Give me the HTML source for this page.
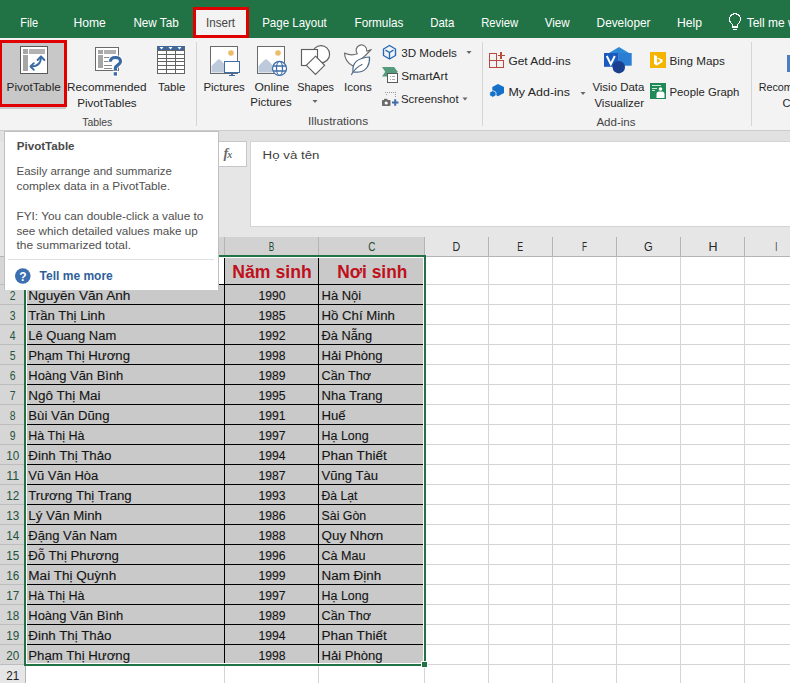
<!DOCTYPE html>
<html><head><meta charset="utf-8"><style>
html,body{margin:0;padding:0;background:#fff;width:790px;height:683px;overflow:hidden}
svg{display:block;font-family:"Liberation Sans", sans-serif}
</style></head><body>
<svg width="790" height="683" viewBox="0 0 790 683" shape-rendering="crispEdges">
<rect x="0" y="0" width="790" height="38" fill="#217346" />
<rect x="193" y="7" width="56" height="31" fill="#f3f3f3" />
<text x="20.3" y="27.3" textLength="17.7" lengthAdjust="spacingAndGlyphs" font-size="13" font-weight="normal" fill="#ffffff" >File</text>
<text x="73.4" y="27.3" textLength="32.4" lengthAdjust="spacingAndGlyphs" font-size="13" font-weight="normal" fill="#ffffff" >Home</text>
<text x="133.4" y="27.3" textLength="45.3" lengthAdjust="spacingAndGlyphs" font-size="13" font-weight="normal" fill="#ffffff" >New Tab</text>
<text x="206" y="27.3" textLength="29" lengthAdjust="spacingAndGlyphs" font-size="13" font-weight="normal" fill="#444444" >Insert</text>
<text x="262.2" y="27.3" textLength="64.6" lengthAdjust="spacingAndGlyphs" font-size="13" font-weight="normal" fill="#ffffff" >Page Layout</text>
<text x="354.5" y="27.3" textLength="48.9" lengthAdjust="spacingAndGlyphs" font-size="13" font-weight="normal" fill="#ffffff" >Formulas</text>
<text x="430.2" y="27.3" textLength="24.1" lengthAdjust="spacingAndGlyphs" font-size="13" font-weight="normal" fill="#ffffff" >Data</text>
<text x="481.2" y="27.3" textLength="37.0" lengthAdjust="spacingAndGlyphs" font-size="13" font-weight="normal" fill="#ffffff" >Review</text>
<text x="544.7" y="27.3" textLength="25.0" lengthAdjust="spacingAndGlyphs" font-size="13" font-weight="normal" fill="#ffffff" >View</text>
<text x="596.6" y="27.3" textLength="53.9" lengthAdjust="spacingAndGlyphs" font-size="13" font-weight="normal" fill="#ffffff" >Developer</text>
<text x="677" y="27.3" textLength="25" lengthAdjust="spacingAndGlyphs" font-size="13" font-weight="normal" fill="#ffffff" >Help</text>
<rect x="194.5" y="8.5" width="53" height="28" fill="none" stroke="#e00000" stroke-width="3"/>
<g fill="none" stroke="#ffffff" stroke-width="1.2"><path d="M732.5 27 v-2.5 c-2-1.5-3-3-3-5.3 a5.5 5.5 0 0 1 11 0 c0 2.3-1 3.8-3 5.3 V27 Z"/><path d="M733 29.5 h4"/></g>
<text x="746.7" y="27.3" textLength="50" lengthAdjust="spacingAndGlyphs" font-size="13" font-weight="normal" fill="#ffffff" >Tell me w</text>
<rect x="0" y="38" width="790" height="92" fill="#f3f3f3" />
<rect x="0" y="130" width="790" height="1" fill="#cccccc" />
<rect x="0" y="40" width="66" height="69" fill="#c8c8c8" />
<rect x="0.5" y="41.5" width="65" height="64" fill="none" stroke="#e00000" stroke-width="3"/>
<rect x="20" y="46" width="28" height="28" fill="#5a5a5a" />
<rect x="21" y="47" width="26" height="26" fill="#ffffff" />
<rect x="23" y="49" width="5" height="5" fill="#a6a6a6" />
<rect x="29" y="49" width="16" height="5" fill="#b3b3b3" />
<rect x="23" y="55" width="5" height="16" fill="#a6a6a6" />
<g fill="none" stroke="#3b6ba3" stroke-width="1.9" shape-rendering="geometricPrecision" stroke-linecap="round" stroke-linejoin="round"><path d="M31.2 66.5 C37.5 66.5 41 63 41 56.8"/><path d="M37.6 60 L41 56.5 L44.4 60"/><path d="M33.8 63.2 L30.5 66.5 L33.8 69.8"/></g>
<text x="6.6" y="90.5" textLength="54.2" lengthAdjust="spacingAndGlyphs" font-size="11.8" font-weight="normal" fill="#262626" >PivotTable</text>
<rect x="95.5" y="47.5" width="23" height="23" fill="#ffffff" stroke="#6a6a6a" stroke-width="1"/>
<rect x="98" y="50" width="4.5" height="4" fill="#a6a6a6" />
<rect x="104" y="50" width="12" height="4" fill="#b0b0b0" />
<rect x="98" y="55" width="4.5" height="13" fill="#a6a6a6" />
<rect x="104" y="56.5" width="8" height="1" fill="#8a8a8a" />
<rect x="104" y="61" width="8" height="1" fill="#8a8a8a" />
<rect x="104" y="64.8" width="8" height="1" fill="#8a8a8a" />
<rect x="104" y="67.5" width="8" height="1" fill="#8a8a8a" />
<g shape-rendering="geometricPrecision" fill="none" stroke-linecap="butt"><path d="M110.5 61.5 C110.5 58.5 112.5 57.5 115.5 57.5 C118.5 57.5 120.5 59 120.5 61.5 C120.5 64.5 116 65 115.4 68 V70.5" stroke="#ffffff" stroke-width="5"/><rect x="112.7" y="71.2" width="5.3" height="5.4" fill="#ffffff"/><path d="M110.5 61.5 C110.5 58.5 112.5 57.5 115.5 57.5 C118.5 57.5 120.5 59 120.5 61.5 C120.5 64.5 116 65 115.4 68 V70.5" stroke="#3a6aa3" stroke-width="3.2"/><rect x="113.7" y="72.2" width="3.3" height="3.4" fill="#3a6aa3"/></g>
<text x="67.1" y="90.6" textLength="79.4" lengthAdjust="spacingAndGlyphs" font-size="11.8" font-weight="normal" fill="#262626" >Recommended</text>
<text x="77.2" y="106.9" textLength="59.5" lengthAdjust="spacingAndGlyphs" font-size="11.8" font-weight="normal" fill="#262626" >PivotTables</text>
<rect x="157" y="46" width="28" height="28" fill="#ffffff" />
<rect x="157" y="46" width="28" height="4" fill="#3a67a3" />
<rect x="157" y="46" width="1" height="28" fill="#646464" />
<rect x="166" y="46" width="1" height="28" fill="#646464" />
<rect x="175" y="46" width="1" height="28" fill="#646464" />
<rect x="184" y="46" width="1" height="28" fill="#646464" />
<rect x="157" y="50" width="28" height="1" fill="#646464" />
<rect x="157" y="54" width="28" height="1" fill="#646464" />
<rect x="157" y="58" width="28" height="1" fill="#646464" />
<rect x="157" y="61" width="28" height="1" fill="#646464" />
<rect x="157" y="65" width="28" height="1" fill="#646464" />
<rect x="157" y="69" width="28" height="1" fill="#646464" />
<rect x="157" y="73" width="28" height="1" fill="#646464" />
<g fill="#ffffff" shape-rendering="geometricPrecision"><path d="M159.5 47 h4 l-2 2.5z"/><path d="M168.5 47 h4 l-2 2.5z"/><path d="M177.5 47 h4 l-2 2.5z"/></g>
<text x="158" y="90.6" textLength="27.3" lengthAdjust="spacingAndGlyphs" font-size="11.8" font-weight="normal" fill="#262626" >Table</text>
<text x="82.2" y="125.5" textLength="30.1" lengthAdjust="spacingAndGlyphs" font-size="11.8" font-weight="normal" fill="#444444" >Tables</text>
<rect x="196" y="42" width="1" height="84" fill="#d5d5d5" />
<rect x="210.5" y="46.5" width="27" height="27" fill="#ffffff" stroke="#6a6a6a" stroke-width="1"/>
<circle cx="231" cy="53" r="2.8" fill="#ebbd66" shape-rendering="geometricPrecision"/>
<path d="M211.5 72.5 L211.5 66 L217.5 60 C218.5 59 219.5 59 220.5 60 L224 63.5 L224 72.5Z" fill="#bccadb" shape-rendering="geometricPrecision"/>
<rect x="224.5" y="61.5" width="15" height="11" fill="#ffffff" stroke="#3f6ea8" stroke-width="1.6"/>
<rect x="229" y="75" width="6" height="1.2" fill="#3f6ea8" />
<rect x="231.3" y="73" width="1.4" height="2" fill="#3f6ea8" />
<text x="203.4" y="90.8" textLength="41.4" lengthAdjust="spacingAndGlyphs" font-size="11.8" font-weight="normal" fill="#262626" >Pictures</text>
<rect x="257.5" y="46.5" width="27" height="27" fill="#ffffff" stroke="#6a6a6a" stroke-width="1"/>
<circle cx="278" cy="53" r="2.8" fill="#ebbd66" shape-rendering="geometricPrecision"/>
<path d="M258.5 72.5 L258.5 66 L264.5 60 C265.5 59 266.5 59 267.5 60 L272 64.5 L272 72.5Z" fill="#bccadb" shape-rendering="geometricPrecision"/>
<g shape-rendering="geometricPrecision" fill="none" stroke="#3f6ea8" stroke-width="1.3"><circle cx="279.5" cy="68.4" r="7" fill="#ffffff"/><ellipse cx="279.5" cy="68.4" rx="3" ry="7"/><path d="M272.8 66 h13.4 M272.8 71 h13.4"/></g>
<text x="254.4" y="90.8" textLength="34.9" lengthAdjust="spacingAndGlyphs" font-size="11.8" font-weight="normal" fill="#262626" >Online</text>
<text x="250.3" y="106.2" textLength="41.4" lengthAdjust="spacingAndGlyphs" font-size="11.8" font-weight="normal" fill="#262626" >Pictures</text>
<g shape-rendering="geometricPrecision" fill="#ffffff" stroke="#5e5e5e" stroke-width="1.15"><circle cx="321" cy="54.2" r="8.6"/><rect x="301.5" y="49.5" width="16" height="16"/><path d="M315.5 56.2 L324.6 65.3 L315.5 74.4 L306.4 65.3 Z"/></g>
<text x="297.2" y="90.8" textLength="36.8" lengthAdjust="spacingAndGlyphs" font-size="11.8" font-weight="normal" fill="#262626" >Shapes</text>
<path d="M312.5 100 h5 l-2.5 3z" fill="#666" shape-rendering="geometricPrecision"/>
<g shape-rendering="geometricPrecision" fill="#ffffff" stroke-width="1.2" stroke-linecap="round" stroke-linejoin="round"><path stroke="#6e6e6e" d="M357.3 53.8 A5.4 5.4 0 1 1 366.8 51.2 L371.3 49.6 L367 53.8 C366 55 365 55.5 364 56.8 L353 66 C349 64 344.8 60 344.5 53 C348.5 55 353.5 55.2 357.3 53.8 Z"/><path stroke="#4f6b8c" d="M353 72 C352 62 358 58 369.5 57 C370 64 367 71 359 72 C357 72.3 355 72.3 353 72 Z"/><path stroke="#4f6b8c" fill="none" d="M351.5 74.5 C354 70 357 67 362 64.5"/></g>
<text x="344" y="90.8" textLength="27.8" lengthAdjust="spacingAndGlyphs" font-size="11.8" font-weight="normal" fill="#262626" >Icons</text>
<text x="308" y="125" textLength="60.2" lengthAdjust="spacingAndGlyphs" font-size="11.8" font-weight="normal" fill="#444444" >Illustrations</text>
<g shape-rendering="geometricPrecision" fill="none" stroke="#2468b8" stroke-width="1.35" stroke-linejoin="round"><path d="M389.5 45.5 L395.5 49 V55.5 L389.5 59 L383.5 55.5 V49 Z"/><path d="M385.5 50.2 L389.5 52.5 L393.5 50.2 M389.5 52.5 V58.5"/></g>
<text x="401.2" y="56.8" textLength="55.7" lengthAdjust="spacingAndGlyphs" font-size="11.8" font-weight="normal" fill="#262626" >3D Models</text>
<path d="M466.5 51 h5 l-2.5 3z" fill="#666" shape-rendering="geometricPrecision"/>
<g shape-rendering="geometricPrecision"><path d="M382 67 H394 L397.8 71.8 L394 76.5 H382 L385.2 71.8 Z" fill="#559c7d"/></g>
<rect x="387" y="73" width="11" height="10" fill="#5a5a5a" />
<rect x="388" y="74" width="9" height="8" fill="#ffffff" />
<rect x="390" y="76" width="1" height="1" fill="#aaa" />
<rect x="392" y="76" width="3" height="1" fill="#aaa" />
<rect x="390" y="79" width="1" height="1" fill="#aaa" />
<rect x="392" y="79" width="3" height="1" fill="#aaa" />
<text x="401.2" y="79.8" textLength="46.5" lengthAdjust="spacingAndGlyphs" font-size="11.8" font-weight="normal" fill="#262626" >SmartArt</text>
<rect x="385" y="92" width="1" height="1" fill="#9a9a9a" />
<rect x="387" y="92" width="1" height="1" fill="#9a9a9a" />
<rect x="389" y="92" width="1" height="1" fill="#9a9a9a" />
<rect x="391" y="92" width="1" height="1" fill="#9a9a9a" />
<rect x="393" y="92" width="1" height="1" fill="#9a9a9a" />
<rect x="395" y="92" width="1" height="1" fill="#9a9a9a" />
<rect x="386" y="94" width="1" height="1" fill="#9a9a9a" />
<rect x="395" y="94" width="1" height="1" fill="#9a9a9a" />
<rect x="395" y="96" width="1" height="1" fill="#9a9a9a" />
<g shape-rendering="geometricPrecision"><rect x="382" y="100" width="8.5" height="6" rx="0.8" fill="#6b6b6b"/><rect x="384" y="98.8" width="3.5" height="2" fill="#6b6b6b"/><circle cx="386.2" cy="103" r="1.6" fill="#ffffff"/><path d="M392 102.5 h6.5 M395.2 99.3 v6.5" stroke="#3f6ea8" stroke-width="2"/></g>
<text x="401" y="102.8" textLength="57.6" lengthAdjust="spacingAndGlyphs" font-size="11.8" font-weight="normal" fill="#262626" >Screenshot</text>
<path d="M462.5 97.5 h5 l-2.5 3z" fill="#666" shape-rendering="geometricPrecision"/>
<rect x="482" y="42" width="1" height="84" fill="#d5d5d5" />
<g fill="none" stroke="#b94a3c" stroke-width="1.1"><path d="M489.5 53.5 H496.5 V67.5 H489.5 Z M489.5 60.5 H503.5 V67.5 H496.5"/><path d="M501 52 V59 M497.5 55.5 H504.5"/></g>
<text x="508.4" y="64.7" textLength="62.3" lengthAdjust="spacingAndGlyphs" font-size="11.8" font-weight="normal" fill="#262626" >Get Add-ins</text>
<g shape-rendering="geometricPrecision" fill="#1470c8"><path d="M498 84 L504 87 V93 L498 96.2 L492.3 93 V87 Z"/><path d="M492.8 90.5 L496 92.3 V95.5 L492.8 97.3 L489.7 95.5 V92.3 Z" stroke="#f3f3f3" stroke-width="0.8"/></g>
<text x="508.4" y="95.7" textLength="61.6" lengthAdjust="spacingAndGlyphs" font-size="11.8" font-weight="normal" fill="#262626" >My Add-ins</text>
<path d="M580.5 92 h5 l-2.5 3z" fill="#666" shape-rendering="geometricPrecision"/>
<g shape-rendering="geometricPrecision"><path d="M609 53 L619 47 L629 53 Z" fill="#2d8ad8"/><rect x="618.5" y="53" width="13.2" height="12.7" fill="#2b7cd3"/><rect x="604" y="53" width="14.6" height="13.8" fill="#185abd"/><circle cx="618.8" cy="67.2" r="6.2" fill="#1b3f8f"/><path d="M606.8 56 L610.8 64.3 L614.8 56" fill="none" stroke="#ffffff" stroke-width="2"/></g>
<text x="592.4" y="91" textLength="52" lengthAdjust="spacingAndGlyphs" font-size="11.8" font-weight="normal" fill="#262626" >Visio Data</text>
<text x="594.4" y="106.5" textLength="49.6" lengthAdjust="spacingAndGlyphs" font-size="11.8" font-weight="normal" fill="#262626" >Visualizer</text>
<text x="596.4" y="125.5" textLength="39.1" lengthAdjust="spacingAndGlyphs" font-size="11.8" font-weight="normal" fill="#444444" >Add-ins</text>
<rect x="650" y="52" width="16" height="16" fill="#f5b400" />
<path d="M654 55 L657 56 V63 L660.5 61 L659 59.5 L657.5 58.8 V57.8 L662.5 59.5 V62 L657 65.5 L654 64 Z" fill="#ffffff" shape-rendering="geometricPrecision"/>
<text x="669.5" y="64.7" textLength="55.3" lengthAdjust="spacingAndGlyphs" font-size="11.8" font-weight="normal" fill="#262626" >Bing Maps</text>
<rect x="650" y="83" width="16" height="16" fill="#1f8a57" />
<rect x="652" y="85" width="9" height="1" fill="#cfe8da" />
<rect x="652" y="87.5" width="5" height="1" fill="#cfe8da" />
<rect x="652" y="90" width="3" height="1" fill="#cfe8da" />
<g shape-rendering="geometricPrecision" fill="#ffffff"><circle cx="660.5" cy="89" r="1.8"/><path d="M656.5 98 V94 C656.5 92 658 91.5 660.5 91.5 C663 91.5 664.5 92 664.5 94 V98Z"/></g>
<text x="669.5" y="95.7" textLength="69.9" lengthAdjust="spacingAndGlyphs" font-size="11.8" font-weight="normal" fill="#262626" >People Graph</text>
<rect x="751" y="42" width="1" height="84" fill="#d5d5d5" />
<rect x="787" y="55" width="3" height="17" fill="#4a7fbf" />
<text x="758.7" y="90.6" textLength="34" lengthAdjust="spacingAndGlyphs" font-size="11.8" font-weight="normal" fill="#262626" >Recom</text>
<text x="782.5" y="106.5" textLength="8" lengthAdjust="spacingAndGlyphs" font-size="11.8" font-weight="normal" fill="#262626" >C</text>
<rect x="0" y="131" width="790" height="106" fill="#e6e6e6" />
<rect x="0" y="131" width="790" height="10" fill="#e1e1e1" />
<rect x="218" y="141" width="29" height="26" fill="#c6c6c6" />
<rect x="219" y="142" width="27" height="24" fill="#ffffff" />
<text x="223.5" y="157.5" font-family="Liberation Serif, serif" font-style="italic" font-weight="bold" font-size="14" fill="#6a6a6a">f</text>
<text x="227.3" y="157.7" font-family="Liberation Serif, serif" font-style="italic" font-weight="bold" font-size="10" fill="#6a6a6a">x</text>
<rect x="250.5" y="141.5" width="560" height="85" fill="#ffffff" stroke="#d4d4d4" stroke-width="1"/>
<text x="262.6" y="158.8" textLength="56.8" lengthAdjust="spacingAndGlyphs" font-size="11.7" font-weight="normal" fill="#404040" >Họ và tên</text>
<rect x="0" y="237" width="790" height="19" fill="#e6e6e6" />
<rect x="25" y="237" width="399" height="19" fill="#d2d2d2" />
<rect x="0" y="256" width="790" height="427" fill="#ffffff" />
<rect x="0" y="256" width="25" height="427" fill="#e6e6e6" />
<rect x="0" y="257" width="24" height="407" fill="#d6d6d6" />
<rect x="224" y="256" width="1" height="427" fill="#d4d4d4" />
<rect x="318" y="256" width="1" height="427" fill="#d4d4d4" />
<rect x="424" y="256" width="1" height="427" fill="#d4d4d4" />
<rect x="488" y="256" width="1" height="427" fill="#d4d4d4" />
<rect x="552" y="256" width="1" height="427" fill="#d4d4d4" />
<rect x="616" y="256" width="1" height="427" fill="#d4d4d4" />
<rect x="680" y="256" width="1" height="427" fill="#d4d4d4" />
<rect x="744" y="256" width="1" height="427" fill="#d4d4d4" />
<rect x="808" y="256" width="1" height="427" fill="#d4d4d4" />
<rect x="25" y="284" width="765" height="1" fill="#d4d4d4" />
<rect x="25" y="304" width="765" height="1" fill="#d4d4d4" />
<rect x="25" y="324" width="765" height="1" fill="#d4d4d4" />
<rect x="25" y="344" width="765" height="1" fill="#d4d4d4" />
<rect x="25" y="364" width="765" height="1" fill="#d4d4d4" />
<rect x="25" y="384" width="765" height="1" fill="#d4d4d4" />
<rect x="25" y="404" width="765" height="1" fill="#d4d4d4" />
<rect x="25" y="424" width="765" height="1" fill="#d4d4d4" />
<rect x="25" y="444" width="765" height="1" fill="#d4d4d4" />
<rect x="25" y="464" width="765" height="1" fill="#d4d4d4" />
<rect x="25" y="484" width="765" height="1" fill="#d4d4d4" />
<rect x="25" y="504" width="765" height="1" fill="#d4d4d4" />
<rect x="25" y="524" width="765" height="1" fill="#d4d4d4" />
<rect x="25" y="544" width="765" height="1" fill="#d4d4d4" />
<rect x="25" y="564" width="765" height="1" fill="#d4d4d4" />
<rect x="25" y="584" width="765" height="1" fill="#d4d4d4" />
<rect x="25" y="604" width="765" height="1" fill="#d4d4d4" />
<rect x="25" y="624" width="765" height="1" fill="#d4d4d4" />
<rect x="25" y="644" width="765" height="1" fill="#d4d4d4" />
<rect x="25" y="664" width="765" height="1" fill="#d4d4d4" />
<rect x="25" y="684" width="765" height="1" fill="#d4d4d4" />
<rect x="224" y="237" width="1" height="19" fill="#b4b4b4" />
<rect x="318" y="237" width="1" height="19" fill="#b4b4b4" />
<rect x="424" y="237" width="1" height="19" fill="#b4b4b4" />
<rect x="488" y="237" width="1" height="19" fill="#b4b4b4" />
<rect x="552" y="237" width="1" height="19" fill="#b4b4b4" />
<rect x="616" y="237" width="1" height="19" fill="#b4b4b4" />
<rect x="680" y="237" width="1" height="19" fill="#b4b4b4" />
<rect x="744" y="237" width="1" height="19" fill="#b4b4b4" />
<rect x="808" y="237" width="1" height="19" fill="#b4b4b4" />
<rect x="0" y="284" width="24" height="1" fill="#bdbdbd" />
<rect x="0" y="304" width="24" height="1" fill="#bdbdbd" />
<rect x="0" y="324" width="24" height="1" fill="#bdbdbd" />
<rect x="0" y="344" width="24" height="1" fill="#bdbdbd" />
<rect x="0" y="364" width="24" height="1" fill="#bdbdbd" />
<rect x="0" y="384" width="24" height="1" fill="#bdbdbd" />
<rect x="0" y="404" width="24" height="1" fill="#bdbdbd" />
<rect x="0" y="424" width="24" height="1" fill="#bdbdbd" />
<rect x="0" y="444" width="24" height="1" fill="#bdbdbd" />
<rect x="0" y="464" width="24" height="1" fill="#bdbdbd" />
<rect x="0" y="484" width="24" height="1" fill="#bdbdbd" />
<rect x="0" y="504" width="24" height="1" fill="#bdbdbd" />
<rect x="0" y="524" width="24" height="1" fill="#bdbdbd" />
<rect x="0" y="544" width="24" height="1" fill="#bdbdbd" />
<rect x="0" y="564" width="24" height="1" fill="#bdbdbd" />
<rect x="0" y="584" width="24" height="1" fill="#bdbdbd" />
<rect x="0" y="604" width="24" height="1" fill="#bdbdbd" />
<rect x="0" y="624" width="24" height="1" fill="#bdbdbd" />
<rect x="0" y="644" width="24" height="1" fill="#bdbdbd" />
<rect x="0" y="664" width="24" height="1" fill="#bdbdbd" />
<rect x="0" y="684" width="24" height="1" fill="#bdbdbd" />
<rect x="25" y="256" width="1" height="427" fill="#b4b4b4" />
<rect x="0" y="256" width="790" height="1" fill="#b4b4b4" />
<text x="268.8" y="251" textLength="5.5" lengthAdjust="spacingAndGlyphs" font-size="12.3" font-weight="normal" fill="#1f4a32" >B</text>
<text x="368.3" y="251" textLength="7.2" lengthAdjust="spacingAndGlyphs" font-size="12.3" font-weight="normal" fill="#1f4a32" >C</text>
<text x="452.6" y="251" textLength="7.7" lengthAdjust="spacingAndGlyphs" font-size="12.3" font-weight="normal" fill="#262626" >D</text>
<text x="517.3" y="251" textLength="5.9" lengthAdjust="spacingAndGlyphs" font-size="12.3" font-weight="normal" fill="#262626" >E</text>
<text x="582" y="251" textLength="5" lengthAdjust="spacingAndGlyphs" font-size="12.3" font-weight="normal" fill="#262626" >F</text>
<text x="644" y="251" textLength="8.7" lengthAdjust="spacingAndGlyphs" font-size="12.3" font-weight="normal" fill="#262626" >G</text>
<text x="708.4" y="251" textLength="9.0" lengthAdjust="spacingAndGlyphs" font-size="12.3" font-weight="normal" fill="#262626" >H</text>
<text x="775.3" y="251" textLength="2.0" lengthAdjust="spacingAndGlyphs" font-size="12.3" font-weight="normal" fill="#262626" >I</text>
<rect x="26" y="257" width="398" height="407" fill="#ffffff" />
<rect x="27" y="258" width="396" height="405" fill="#c9c9c9" />
<rect x="27" y="258" width="197" height="26" fill="#ffffff" />
<rect x="27" y="284" width="396" height="1" fill="#000000" />
<rect x="27" y="304" width="396" height="1" fill="#000000" />
<rect x="27" y="324" width="396" height="1" fill="#000000" />
<rect x="27" y="344" width="396" height="1" fill="#000000" />
<rect x="27" y="364" width="396" height="1" fill="#000000" />
<rect x="27" y="384" width="396" height="1" fill="#000000" />
<rect x="27" y="404" width="396" height="1" fill="#000000" />
<rect x="27" y="424" width="396" height="1" fill="#000000" />
<rect x="27" y="444" width="396" height="1" fill="#000000" />
<rect x="27" y="464" width="396" height="1" fill="#000000" />
<rect x="27" y="484" width="396" height="1" fill="#000000" />
<rect x="27" y="504" width="396" height="1" fill="#000000" />
<rect x="27" y="524" width="396" height="1" fill="#000000" />
<rect x="27" y="544" width="396" height="1" fill="#000000" />
<rect x="27" y="564" width="396" height="1" fill="#000000" />
<rect x="27" y="584" width="396" height="1" fill="#000000" />
<rect x="27" y="604" width="396" height="1" fill="#000000" />
<rect x="27" y="624" width="396" height="1" fill="#000000" />
<rect x="27" y="644" width="396" height="1" fill="#000000" />
<rect x="27" y="664" width="396" height="1" fill="#000000" />
<rect x="224" y="258" width="1" height="405" fill="#000000" />
<rect x="318" y="258" width="1" height="405" fill="#000000" />
<text x="28.3" y="300" textLength="102.1" lengthAdjust="spacingAndGlyphs" font-size="12.5" font-weight="normal" fill="#141414" stroke="#141414" stroke-width="0.12">Nguyễn Văn Anh</text>
<text x="258.5" y="300" textLength="27.1" lengthAdjust="spacingAndGlyphs" font-size="13" font-weight="normal" fill="#141414" stroke="#141414" stroke-width="0.12">1990</text>
<text x="321.5" y="300" textLength="39.7" lengthAdjust="spacingAndGlyphs" font-size="12.5" font-weight="normal" fill="#141414" stroke="#141414" stroke-width="0.12">Hà Nội</text>
<text x="28.3" y="320" textLength="76.7" lengthAdjust="spacingAndGlyphs" font-size="12.5" font-weight="normal" fill="#141414" stroke="#141414" stroke-width="0.12">Trần Thị Linh</text>
<text x="258.5" y="320" textLength="27.1" lengthAdjust="spacingAndGlyphs" font-size="13" font-weight="normal" fill="#141414" stroke="#141414" stroke-width="0.12">1985</text>
<text x="321.5" y="320" textLength="73.4" lengthAdjust="spacingAndGlyphs" font-size="12.5" font-weight="normal" fill="#141414" stroke="#141414" stroke-width="0.12">Hồ Chí Minh</text>
<text x="28.3" y="340" textLength="87.9" lengthAdjust="spacingAndGlyphs" font-size="12.5" font-weight="normal" fill="#141414" stroke="#141414" stroke-width="0.12">Lê Quang Nam</text>
<text x="258.5" y="340" textLength="27.1" lengthAdjust="spacingAndGlyphs" font-size="13" font-weight="normal" fill="#141414" stroke="#141414" stroke-width="0.12">1992</text>
<text x="321.5" y="340" textLength="50.5" lengthAdjust="spacingAndGlyphs" font-size="12.5" font-weight="normal" fill="#141414" stroke="#141414" stroke-width="0.12">Đà Nẵng</text>
<text x="28.3" y="360" textLength="101.7" lengthAdjust="spacingAndGlyphs" font-size="12.5" font-weight="normal" fill="#141414" stroke="#141414" stroke-width="0.12">Phạm Thị Hương</text>
<text x="258.5" y="360" textLength="27.1" lengthAdjust="spacingAndGlyphs" font-size="13" font-weight="normal" fill="#141414" stroke="#141414" stroke-width="0.12">1998</text>
<text x="321.5" y="360" textLength="61.1" lengthAdjust="spacingAndGlyphs" font-size="12.5" font-weight="normal" fill="#141414" stroke="#141414" stroke-width="0.12">Hải Phòng</text>
<text x="28.3" y="380" textLength="95.0" lengthAdjust="spacingAndGlyphs" font-size="12.5" font-weight="normal" fill="#141414" stroke="#141414" stroke-width="0.12">Hoàng Văn Bình</text>
<text x="258.5" y="380" textLength="27.1" lengthAdjust="spacingAndGlyphs" font-size="13" font-weight="normal" fill="#141414" stroke="#141414" stroke-width="0.12">1989</text>
<text x="321.5" y="380" textLength="49.5" lengthAdjust="spacingAndGlyphs" font-size="12.5" font-weight="normal" fill="#141414" stroke="#141414" stroke-width="0.12">Cần Thơ</text>
<text x="28.3" y="400" textLength="72.3" lengthAdjust="spacingAndGlyphs" font-size="12.5" font-weight="normal" fill="#141414" stroke="#141414" stroke-width="0.12">Ngô Thị Mai</text>
<text x="258.5" y="400" textLength="27.1" lengthAdjust="spacingAndGlyphs" font-size="13" font-weight="normal" fill="#141414" stroke="#141414" stroke-width="0.12">1995</text>
<text x="321.5" y="400" textLength="61.1" lengthAdjust="spacingAndGlyphs" font-size="12.5" font-weight="normal" fill="#141414" stroke="#141414" stroke-width="0.12">Nha Trang</text>
<text x="28.3" y="420" textLength="81.2" lengthAdjust="spacingAndGlyphs" font-size="12.5" font-weight="normal" fill="#141414" stroke="#141414" stroke-width="0.12">Bùi Văn Dũng</text>
<text x="258.5" y="420" textLength="27.1" lengthAdjust="spacingAndGlyphs" font-size="13" font-weight="normal" fill="#141414" stroke="#141414" stroke-width="0.12">1991</text>
<text x="321.5" y="420" textLength="24.2" lengthAdjust="spacingAndGlyphs" font-size="12.5" font-weight="normal" fill="#141414" stroke="#141414" stroke-width="0.12">Huế</text>
<text x="28.3" y="440" textLength="56.1" lengthAdjust="spacingAndGlyphs" font-size="12.5" font-weight="normal" fill="#141414" stroke="#141414" stroke-width="0.12">Hà Thị Hà</text>
<text x="258.5" y="440" textLength="27.1" lengthAdjust="spacingAndGlyphs" font-size="13" font-weight="normal" fill="#141414" stroke="#141414" stroke-width="0.12">1997</text>
<text x="321.5" y="440" textLength="47.1" lengthAdjust="spacingAndGlyphs" font-size="12.5" font-weight="normal" fill="#141414" stroke="#141414" stroke-width="0.12">Hạ Long</text>
<text x="28.3" y="460" textLength="83.2" lengthAdjust="spacingAndGlyphs" font-size="12.5" font-weight="normal" fill="#141414" stroke="#141414" stroke-width="0.12">Đinh Thị Thảo</text>
<text x="258.5" y="460" textLength="27.1" lengthAdjust="spacingAndGlyphs" font-size="13" font-weight="normal" fill="#141414" stroke="#141414" stroke-width="0.12">1994</text>
<text x="321.5" y="460" textLength="65.2" lengthAdjust="spacingAndGlyphs" font-size="12.5" font-weight="normal" fill="#141414" stroke="#141414" stroke-width="0.12">Phan Thiết</text>
<text x="28.3" y="480" textLength="70.0" lengthAdjust="spacingAndGlyphs" font-size="12.5" font-weight="normal" fill="#141414" stroke="#141414" stroke-width="0.12">Vũ Văn Hòa</text>
<text x="258.5" y="480" textLength="27.1" lengthAdjust="spacingAndGlyphs" font-size="13" font-weight="normal" fill="#141414" stroke="#141414" stroke-width="0.12">1987</text>
<text x="321.5" y="480" textLength="56.5" lengthAdjust="spacingAndGlyphs" font-size="12.5" font-weight="normal" fill="#141414" stroke="#141414" stroke-width="0.12">Vũng Tàu</text>
<text x="28.3" y="500" textLength="103.4" lengthAdjust="spacingAndGlyphs" font-size="12.5" font-weight="normal" fill="#141414" stroke="#141414" stroke-width="0.12">Trương Thị Trang</text>
<text x="258.5" y="500" textLength="27.1" lengthAdjust="spacingAndGlyphs" font-size="13" font-weight="normal" fill="#141414" stroke="#141414" stroke-width="0.12">1993</text>
<text x="321.5" y="500" textLength="35.9" lengthAdjust="spacingAndGlyphs" font-size="12.5" font-weight="normal" fill="#141414" stroke="#141414" stroke-width="0.12">Đà Lạt</text>
<text x="28.3" y="520" textLength="73.7" lengthAdjust="spacingAndGlyphs" font-size="12.5" font-weight="normal" fill="#141414" stroke="#141414" stroke-width="0.12">Lý Văn Minh</text>
<text x="258.5" y="520" textLength="27.1" lengthAdjust="spacingAndGlyphs" font-size="13" font-weight="normal" fill="#141414" stroke="#141414" stroke-width="0.12">1986</text>
<text x="321.5" y="520" textLength="44.7" lengthAdjust="spacingAndGlyphs" font-size="12.5" font-weight="normal" fill="#141414" stroke="#141414" stroke-width="0.12">Sài Gòn</text>
<text x="28.3" y="540" textLength="88.9" lengthAdjust="spacingAndGlyphs" font-size="12.5" font-weight="normal" fill="#141414" stroke="#141414" stroke-width="0.12">Đặng Văn Nam</text>
<text x="258.5" y="540" textLength="27.1" lengthAdjust="spacingAndGlyphs" font-size="13" font-weight="normal" fill="#141414" stroke="#141414" stroke-width="0.12">1988</text>
<text x="321.5" y="540" textLength="61.7" lengthAdjust="spacingAndGlyphs" font-size="12.5" font-weight="normal" fill="#141414" stroke="#141414" stroke-width="0.12">Quy Nhơn</text>
<text x="28.3" y="560" textLength="90.5" lengthAdjust="spacingAndGlyphs" font-size="12.5" font-weight="normal" fill="#141414" stroke="#141414" stroke-width="0.12">Đỗ Thị Phương</text>
<text x="258.5" y="560" textLength="27.1" lengthAdjust="spacingAndGlyphs" font-size="13" font-weight="normal" fill="#141414" stroke="#141414" stroke-width="0.12">1996</text>
<text x="321.5" y="560" textLength="44.1" lengthAdjust="spacingAndGlyphs" font-size="12.5" font-weight="normal" fill="#141414" stroke="#141414" stroke-width="0.12">Cà Mau</text>
<text x="28.3" y="580" textLength="87.9" lengthAdjust="spacingAndGlyphs" font-size="12.5" font-weight="normal" fill="#141414" stroke="#141414" stroke-width="0.12">Mai Thị Quỳnh</text>
<text x="258.5" y="580" textLength="27.1" lengthAdjust="spacingAndGlyphs" font-size="13" font-weight="normal" fill="#141414" stroke="#141414" stroke-width="0.12">1999</text>
<text x="321.5" y="580" textLength="59.7" lengthAdjust="spacingAndGlyphs" font-size="12.5" font-weight="normal" fill="#141414" stroke="#141414" stroke-width="0.12">Nam Định</text>
<text x="28.3" y="600" textLength="56.1" lengthAdjust="spacingAndGlyphs" font-size="12.5" font-weight="normal" fill="#141414" stroke="#141414" stroke-width="0.12">Hà Thị Hà</text>
<text x="258.5" y="600" textLength="27.1" lengthAdjust="spacingAndGlyphs" font-size="13" font-weight="normal" fill="#141414" stroke="#141414" stroke-width="0.12">1997</text>
<text x="321.5" y="600" textLength="47.1" lengthAdjust="spacingAndGlyphs" font-size="12.5" font-weight="normal" fill="#141414" stroke="#141414" stroke-width="0.12">Hạ Long</text>
<text x="28.3" y="620" textLength="95.0" lengthAdjust="spacingAndGlyphs" font-size="12.5" font-weight="normal" fill="#141414" stroke="#141414" stroke-width="0.12">Hoàng Văn Bình</text>
<text x="258.5" y="620" textLength="27.1" lengthAdjust="spacingAndGlyphs" font-size="13" font-weight="normal" fill="#141414" stroke="#141414" stroke-width="0.12">1989</text>
<text x="321.5" y="620" textLength="49.5" lengthAdjust="spacingAndGlyphs" font-size="12.5" font-weight="normal" fill="#141414" stroke="#141414" stroke-width="0.12">Cần Thơ</text>
<text x="28.3" y="640" textLength="83.2" lengthAdjust="spacingAndGlyphs" font-size="12.5" font-weight="normal" fill="#141414" stroke="#141414" stroke-width="0.12">Đinh Thị Thảo</text>
<text x="258.5" y="640" textLength="27.1" lengthAdjust="spacingAndGlyphs" font-size="13" font-weight="normal" fill="#141414" stroke="#141414" stroke-width="0.12">1994</text>
<text x="321.5" y="640" textLength="65.2" lengthAdjust="spacingAndGlyphs" font-size="12.5" font-weight="normal" fill="#141414" stroke="#141414" stroke-width="0.12">Phan Thiết</text>
<text x="28.3" y="660" textLength="101.7" lengthAdjust="spacingAndGlyphs" font-size="12.5" font-weight="normal" fill="#141414" stroke="#141414" stroke-width="0.12">Phạm Thị Hương</text>
<text x="258.5" y="660" textLength="27.1" lengthAdjust="spacingAndGlyphs" font-size="13" font-weight="normal" fill="#141414" stroke="#141414" stroke-width="0.12">1998</text>
<text x="321.5" y="660" textLength="61.1" lengthAdjust="spacingAndGlyphs" font-size="12.5" font-weight="normal" fill="#141414" stroke="#141414" stroke-width="0.12">Hải Phòng</text>
<text x="232.3" y="278" textLength="79.4" lengthAdjust="spacingAndGlyphs" font-size="18" font-weight="bold" fill="#c0101c" >Năm sinh</text>
<text x="337.2" y="278" textLength="70.2" lengthAdjust="spacingAndGlyphs" font-size="18" font-weight="bold" fill="#c0101c" >Nơi sinh</text>
<text x="9.799999999999999" y="300" textLength="5.8" lengthAdjust="spacingAndGlyphs" font-size="12.5" font-weight="normal" fill="#26533b" >2</text>
<text x="9.799999999999999" y="320" textLength="5.8" lengthAdjust="spacingAndGlyphs" font-size="12.5" font-weight="normal" fill="#26533b" >3</text>
<text x="9.799999999999999" y="340" textLength="5.8" lengthAdjust="spacingAndGlyphs" font-size="12.5" font-weight="normal" fill="#26533b" >4</text>
<text x="9.799999999999999" y="360" textLength="5.8" lengthAdjust="spacingAndGlyphs" font-size="12.5" font-weight="normal" fill="#26533b" >5</text>
<text x="9.799999999999999" y="380" textLength="5.8" lengthAdjust="spacingAndGlyphs" font-size="12.5" font-weight="normal" fill="#26533b" >6</text>
<text x="9.799999999999999" y="400" textLength="5.8" lengthAdjust="spacingAndGlyphs" font-size="12.5" font-weight="normal" fill="#26533b" >7</text>
<text x="9.799999999999999" y="420" textLength="5.8" lengthAdjust="spacingAndGlyphs" font-size="12.5" font-weight="normal" fill="#26533b" >8</text>
<text x="9.799999999999999" y="440" textLength="5.8" lengthAdjust="spacingAndGlyphs" font-size="12.5" font-weight="normal" fill="#26533b" >9</text>
<text x="6.199999999999999" y="460" textLength="13" lengthAdjust="spacingAndGlyphs" font-size="12.5" font-weight="normal" fill="#26533b" >10</text>
<text x="6.199999999999999" y="480" textLength="13" lengthAdjust="spacingAndGlyphs" font-size="12.5" font-weight="normal" fill="#26533b" >11</text>
<text x="6.199999999999999" y="500" textLength="13" lengthAdjust="spacingAndGlyphs" font-size="12.5" font-weight="normal" fill="#26533b" >12</text>
<text x="6.199999999999999" y="520" textLength="13" lengthAdjust="spacingAndGlyphs" font-size="12.5" font-weight="normal" fill="#26533b" >13</text>
<text x="6.199999999999999" y="540" textLength="13" lengthAdjust="spacingAndGlyphs" font-size="12.5" font-weight="normal" fill="#26533b" >14</text>
<text x="6.199999999999999" y="560" textLength="13" lengthAdjust="spacingAndGlyphs" font-size="12.5" font-weight="normal" fill="#26533b" >15</text>
<text x="6.199999999999999" y="580" textLength="13" lengthAdjust="spacingAndGlyphs" font-size="12.5" font-weight="normal" fill="#26533b" >16</text>
<text x="6.199999999999999" y="600" textLength="13" lengthAdjust="spacingAndGlyphs" font-size="12.5" font-weight="normal" fill="#26533b" >17</text>
<text x="6.199999999999999" y="620" textLength="13" lengthAdjust="spacingAndGlyphs" font-size="12.5" font-weight="normal" fill="#26533b" >18</text>
<text x="6.199999999999999" y="640" textLength="13" lengthAdjust="spacingAndGlyphs" font-size="12.5" font-weight="normal" fill="#26533b" >19</text>
<text x="6.199999999999999" y="660" textLength="13" lengthAdjust="spacingAndGlyphs" font-size="12.5" font-weight="normal" fill="#26533b" >20</text>
<text x="6.199999999999999" y="680" textLength="13" lengthAdjust="spacingAndGlyphs" font-size="12.5" font-weight="normal" fill="#222" >21</text>
<rect x="24" y="255" width="2" height="411" fill="#217346" />
<rect x="24" y="255" width="402" height="2" fill="#217346" />
<rect x="424" y="255" width="2" height="406" fill="#217346" />
<rect x="24" y="664" width="397" height="2" fill="#217346" />
<rect x="421" y="661" width="7" height="7" fill="#ffffff" />
<rect x="422" y="662" width="5" height="5" fill="#217346" />
<rect x="4" y="131" width="215" height="159" fill="#c0c0c0" />
<rect x="5" y="132" width="213" height="158" fill="#ffffff" />
<text x="16.7" y="149.7" textLength="57.9" lengthAdjust="spacingAndGlyphs" font-size="11.5" font-weight="bold" fill="#4a4a4a" >PivotTable</text>
<text x="16.5" y="175" textLength="155.5" lengthAdjust="spacingAndGlyphs" font-size="11.5" font-weight="normal" fill="#505050" >Easily arrange and summarize</text>
<text x="16.5" y="189.6" textLength="153.5" lengthAdjust="spacingAndGlyphs" font-size="11.5" font-weight="normal" fill="#505050" >complex data in a PivotTable.</text>
<text x="16.5" y="219.8" textLength="186.8" lengthAdjust="spacingAndGlyphs" font-size="11.5" font-weight="normal" fill="#505050" >FYI: You can double-click a value to</text>
<text x="16.5" y="234.6" textLength="181.3" lengthAdjust="spacingAndGlyphs" font-size="11.5" font-weight="normal" fill="#505050" >see which detailed values make up</text>
<text x="16.5" y="249.3" textLength="114.5" lengthAdjust="spacingAndGlyphs" font-size="11.5" font-weight="normal" fill="#505050" >the summarized total.</text>
<rect x="8" y="259" width="206" height="1" fill="#e1e1e1" />
<g shape-rendering="geometricPrecision"><circle cx="22.8" cy="276" r="7.8" fill="#3b6fb0"/><text x="22.8" y="280.5" font-size="12" font-weight="bold" fill="#ffffff" text-anchor="middle">?</text></g>
<text x="39.6" y="280.4" textLength="73.2" lengthAdjust="spacingAndGlyphs" font-size="12" font-weight="bold" fill="#2f5f9a" >Tell me more</text>
</svg>
</body></html>
